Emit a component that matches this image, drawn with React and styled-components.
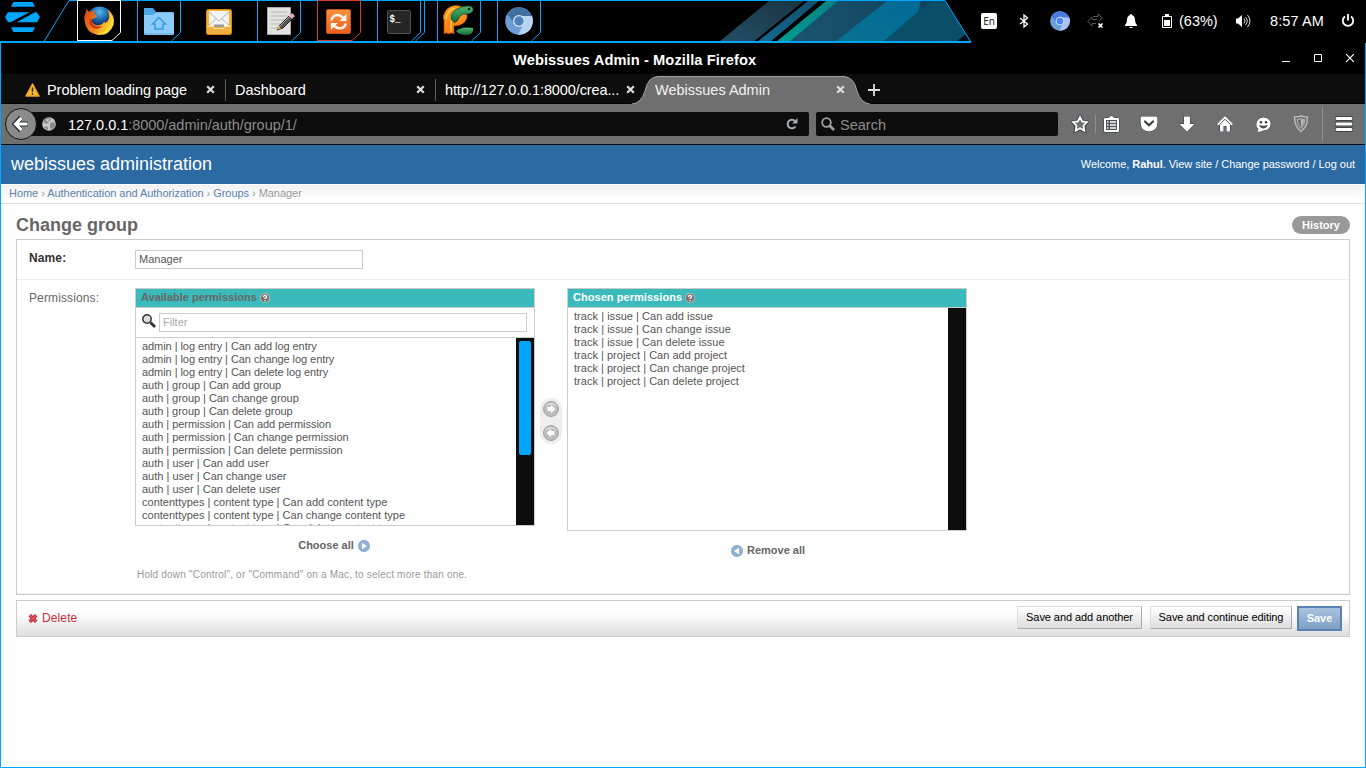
import React from "react";
import styled, { createGlobalStyle, css } from "styled-components";

const BLUE = "#00a5ff";
const DARK = "#0d0d0d";

const GlobalStyle = createGlobalStyle`
  * { box-sizing: border-box; }
  body { margin: 0; background: #000; overflow: hidden; }
  svg { display: block; flex: none; }
  a { text-decoration: none; color: inherit; }
`;

const Desktop = styled.div`
  width: 1366px;
  height: 768px;
  display: flex;
  flex-direction: column;
  background: #000;
  font-family: "Liberation Sans", Arial, sans-serif;
  overflow: hidden;
`;

/* ---------- system panel ---------- */
const Panel = styled.header`
  height: 43px;
  flex: none;
  display: flex;
  position: relative;
  color: #fff;
`;
const PanelBackdrop = styled.svg`
  position: absolute;
  left: 0;
  top: 0;
`;
const MenuLogo = styled.div`
  width: 77px;
  position: relative;
`;
const Dock = styled.nav`
  display: flex;
  position: relative;
`;
const DockItem = styled.div`
  width: 60px;
  height: 43px;
  display: grid;
  > * { grid-area: 1 / 1; }
`;
const Tray = styled.div`
  margin-left: auto;
  width: 395px;
  height: 41px;
  position: relative;
  display: flex;
  align-items: center;
  font-size: 14.5px;
`;
const TrayCell = styled.div`
  width: ${(p) => p.$w}px;
  padding-left: ${(p) => p.$indent || 0}px;
  letter-spacing: ${(p) => p.$ls || 0}px;
  flex: none;
  white-space: nowrap;
  display: flex;
  align-items: center;
`;
const LangBadge = styled.div`
  width: 16px;
  height: 16px;
  border-radius: 2px;
  background: #fff;
  color: #222;
  font: 10px/17px "Noto Sans", sans-serif;
  text-align: center;
`;

/* ---------- browser window ---------- */
const Window = styled.main`
  flex: 1;
  min-height: 0;
  display: flex;
  flex-direction: column;
  border: solid ${BLUE};
  border-width: 0 1px 1px;
  background: #fff;
`;
const TitleBar = styled.div`
  height: 31px;
  flex: none;
  background: #000;
  color: #fff;
  display: flex;
  align-items: center;
  padding: 3px 11px 0 512px;
  font-weight: bold;
  font-size: 14.67px;
  letter-spacing: 0.09px;
`;
const WindowControls = styled.div`
  margin-left: auto;
  display: flex;
  gap: 24px;
  padding-bottom: 4px;
`;
const TabStrip = styled.div`
  height: 30px;
  flex: none;
  display: flex;
  background: ${DARK};
  border-bottom: 1px solid #000;
  padding-left: 14px;
`;
const Tab = styled.div`
  width: 210px;
  height: 30px;
  display: flex;
  align-items: center;
  padding: 1px 10px 0 ${(p) => (p.$divided ? 9 : 10)}px;
  color: ${(p) => (p.$active ? "#f2f2f2" : "#fff")};
  font-size: 14.5px;
  position: relative;
  white-space: nowrap;
  ${(p) =>
    p.$divided &&
    css`
      border-left: 1px solid #5e5e5e;
      height: 22px;
      margin-top: 5px;
      padding-top: 0;
      padding-bottom: 1px;
    `}
`;
const TabShape = styled.svg`
  position: absolute;
  left: -15px;
  top: 0;
`;
const TabLabel = styled.span`
  position: relative;
  flex: 1;
  margin-left: ${(p) => p.$gap || 0}px;
  letter-spacing: ${(p) => p.$ls || 0}px;
`;
const CloseIcon = styled.svg`
  position: relative;
`;
const NewTab = styled.div`
  padding: 10px 0 0 13px;
`;
const Toolbar = styled.div`
  height: 41px;
  flex: none;
  display: flex;
  align-items: center;
  background: #6f6f6f;
  border-bottom: 1px solid #0a0a0a;
  padding-left: 4px;
`;
const BackButton = styled.div`
  width: 32px;
  height: 32px;
  flex: none;
  border-radius: 50%;
  border: 1px solid #111;
  background: #8a8a8a;
  display: grid;
  place-items: center;
  z-index: 1;
`;
const Field = styled.div`
  height: 24px;
  flex: none;
  display: flex;
  align-items: center;
  background: ${DARK};
  border-radius: 2px;
  font-size: 14.5px;
  color: #8c8c8c;
`;
const UrlField = styled(Field)`
  width: 779px;
  margin-left: -7px;
  padding: 0 11px 0 12px;
`;
const UrlText = styled.span`
  flex: 1;
  padding: 2px 0 0 12px;
  letter-spacing: -0.03px;
  b { font-weight: normal; color: #fff; }
`;
const SearchField = styled(Field)`
  width: 242px;
  margin-left: 7px;
  padding-left: 5px;
  gap: 5px;
  span { padding-top: 2px; }
`;
const Actions = styled.div`
  display: flex;
  align-items: center;
  margin-left: 12px;
`;
const Action = styled.div`
  width: 38px;
  height: 40px;
  display: grid;
  place-items: center;
`;
const StarAction = styled(Action)`
  width: 20px;
`;
const Divider = styled.div`
  width: 1px;
  height: ${(p) => p.$h}px;
  background: #8f8f8f;
  margin: 0 ${(p) => p.$r || 0}px 0 ${(p) => p.$l || 0}px;
`;

/* ---------- admin page ---------- */
const SiteHeader = styled.div`
  height: 39px;
  flex: none;
  display: flex;
  align-items: center;
  justify-content: space-between;
  padding: 0 10px;
  background: #2b6aa2;
  color: #fff;
`;
const SiteName = styled.div`
  font-size: 18px;
  line-height: 20px;
  padding-bottom: 1px;
`;
const UserTools = styled.div`
  font-size: 11px;
  padding-bottom: 2px;
  letter-spacing: -0.035px;
`;
const Breadcrumbs = styled.div`
  height: 20px;
  flex: none;
  padding: 2px 8px;
  font-size: 11px;
  line-height: 13px;
  letter-spacing: -0.045px;
  color: #999;
  border-top: 1px solid #fff;
  border-bottom: 1px solid #ddd;
  background: linear-gradient(#f1f1f1, #fff 80%);
  a { color: #5b80b2; }
`;
const Content = styled.div`
  padding: 11px 15px 0;
`;
const Heading = styled.div`
  display: flex;
  justify-content: space-between;
  height: 24px;
`;
const Title = styled.h1`
  margin: 0;
  font-size: 18px;
  line-height: 20px;
  color: #666;
`;
const HistoryButton = styled.a`
  height: 18px;
  width: 58px;
  margin-top: 1px;
  border-radius: 9px;
  background: #999;
  color: #fff;
  font: bold 11px/18px "Liberation Sans", sans-serif;
  text-align: center;
`;
const Module = styled.section`
  border: 1px solid #ccc;
`;
const FormRow = styled.div`
  display: flex;
  height: ${(p) => p.$h}px;
  padding: ${(p) => p.$top}px 12px 0;
  border-bottom: 1px solid #eee;
`;
const Label = styled.label`
  width: 106px;
  flex: none;
  padding-top: ${(p) => p.$top || 0}px;
  font-size: 12px;
  line-height: 16px;
  letter-spacing: 0.12px;
  color: ${(p) => (p.$strong ? "#333" : "#666")};
  font-weight: ${(p) => (p.$strong ? "bold" : "normal")};
`;
const Input = styled.div`
  width: ${(p) => p.$w}px;
  height: 19px;
  border: 1px solid #ccc;
  padding-left: 3px;
  font-size: 11px;
  line-height: 17px;
  color: ${(p) => (p.$placeholder ? "#aaa" : "#555")};
`;
const Selector = styled.div`
  display: flex;
`;
const Column = styled.div`
  width: 400px;
`;
const SelectBox = styled.div`
  border: 1px solid #ccc;
`;
const BoxTitle = styled.h2`
  margin: 0;
  height: 19px;
  display: flex;
  gap: 3px;
  padding: 1px 5px 0;
  background: #3bbabb;
  border-bottom: 1px solid #ccc;
  font-size: 11px;
  line-height: 15px;
  color: ${(p) => (p.$chosen ? "#fff" : "#666")};
  letter-spacing: ${(p) => (p.$chosen ? 0.05 : 0)}px;
  svg { margin-top: 3px; }
`;
const FilterBar = styled.div`
  display: flex;
  height: 30px;
  padding: 5px 6px;
  gap: 3px;
  border-bottom: 1px solid #ccc;
  svg { margin-top: 1px; }
`;
const ListArea = styled.div`
  display: flex;
  justify-content: space-between;
  height: ${(p) => p.$h}px;
`;
const Options = styled.ul`
  list-style: none;
  margin: 0;
  padding: 2px 6px 0;
  overflow: hidden;
  color: #555;
  font-size: 11px;
  line-height: 13px;
`;
const Option = styled.li`
  letter-spacing: ${(p) => p.$ls}px;
`;
const ScrollTrack = styled.div`
  width: 18px;
  background: ${DARK};
  padding: 3px;
`;
const ScrollThumb = styled.div`
  height: 114px;
  border-radius: 2px;
  background: ${BLUE};
`;
const Chooser = styled.div`
  width: 22px;
  height: 46px;
  margin: 110px 5px 0;
  padding: 3px;
  border-radius: 11px;
  background: #eee;
  display: flex;
  flex-direction: column;
  gap: 8px;
`;
const BulkLink = styled.a`
  display: flex;
  justify-content: center;
  align-items: center;
  gap: 4px;
  margin-top: 12px;
  padding: ${(p) => (p.$left ? "0 0 0 2px" : "0 2px 0 0")};
  height: 15px;
  font-size: 11px;
  font-weight: bold;
  color: #666;
  line-height: 14px;
  span { padding-bottom: 1px; }
`;
const Help = styled.p`
  margin: 14px 0 0 2px;
  font-size: 10px;
  line-height: 15px;
  color: #999;
  white-space: nowrap;
  letter-spacing: 0.2px;
`;
const SubmitRow = styled.div`
  display: flex;
  height: 37px;
  margin-top: 5px;
  padding: 5px 7px 0 11px;
  border: 1px solid #ccc;
  background: linear-gradient(#fff 35%, #dedede);
`;
const DeleteLink = styled.a`
  display: flex;
  gap: 4px;
  margin-right: auto;
  font-size: 12px;
  line-height: 24px;
  letter-spacing: 0.12px;
  color: #cc2c3c;
  svg { margin-top: 7px; }
`;
const Button = styled.button`
  width: ${(p) => p.$w}px;
  height: 23px;
  margin: 0 0 0 ${(p) => p.$gap}px;
  padding: 0;
  border: 1px solid;
  border-color: #ddd #aaa #aaa #ddd;
  background: linear-gradient(#fff, #ddd);
  color: #000;
  font: 11px/19px "Liberation Sans", Arial, sans-serif;
  letter-spacing: -0.07px;
  white-space: nowrap;
  ${(p) =>
    p.$primary &&
    css`
      height: 25px;
      border: 2px solid #5b80b2;
      background: linear-gradient(#a9c3de, #7ca0c7);
      color: #fff;
      font-weight: bold;
    `}
`;

/* ---------- drawings ---------- */
const Backdrop = () => (
  <PanelBackdrop width="972" height="43" viewBox="0 0 972 43">
    <defs>
      <linearGradient id="st1" x1="0" y1="1" x2="1" y2="0"><stop stopColor="#234f66" /><stop offset="1" stopColor="#193442" /></linearGradient>
      <linearGradient id="st2" x1="0" y1="1" x2="1" y2="0"><stop stopColor="#136a92" /><stop offset="1" stopColor="#154c6a" /></linearGradient>
      <linearGradient id="st3" x1="0" y1="1" x2="1" y2="0"><stop stopColor="#009e92" /><stop offset="1" stopColor="#087f80" /></linearGradient>
      <linearGradient id="st4"><stop stopColor="#1a5470" /><stop offset="1" stopColor="#0d3d55" /></linearGradient>
      <linearGradient id="st5" x1="0" y1="1" x2="1" y2="0"><stop stopColor="#0a7290" /><stop offset="1" stopColor="#006a98" /></linearGradient>
    </defs>
    <path d="M719 42L769 1H804L753 42Z" fill="url(#st1)" />
    <path d="M757 42L808 1H819L770 42Z" fill="url(#st2)" />
    <path d="M776 42L826 1H839L791 42Z" fill="url(#st3)" />
    <path d="M789 42L838 1H945L971 42Z" fill="url(#st4)" />
    <path d="M835 42L887 1H921L918 12L883 42Z" fill="url(#st5)" />
    <path d="M883 42L931 1H945L966 34L956 42Z" fill="#0a4e68" />
    <path d="M956 42L966 34L971 42Z" fill="#061018" />
    <path d="M44 41.500L69 .5H945L970.500 41.500" fill="none" stroke={BLUE} />
    <path d="M0 42H971" stroke={BLUE} strokeWidth="2" />
  </PanelBackdrop>
);

const Frame = ({ color = BLUE, double }) => (
  <svg width="52" height="43" viewBox="0 0 52 43" fill="none" stroke={color}>
    <path d="M.5 41V.5H43.500V32.500L34.500 41" />
    {double && <path d="M47.500 0V32.500L38.500 41" />}
    {color !== BLUE && <path d="M0 40.500H35" />}
  </svg>
);

const Zorin = () => (
  <svg width="44" height="36" viewBox="0 0 44 36" fill={BLUE}>
    <path d="M13.500 2H32.500L35 6.800H11ZM11 27.300H35L32.500 32H13.500Z" />
    <path d="M8 12.300H29.500L10.500 22.300H8L5 17ZM36.500 12.300L40 17L37 22.300H16.500L35 12.300Z" />
  </svg>
);

const icon = (children, x, y) => (
  <svg width="60" height="43" viewBox="0 0 60 43"><g transform={`translate(${x} ${y})`}>{children}</g></svg>
);

const Firefox = () => icon(
  <>
    <defs>
      <radialGradient id="ffb" cx=".5" cy=".2"><stop stopColor="#58b9e8" /><stop offset=".6" stopColor="#1a66ad" /><stop offset="1" stopColor="#12295d" /></radialGradient>
      <linearGradient id="ffo" x1="0" x2="1" y2=".5"><stop stopColor="#d8400e" /><stop offset=".55" stopColor="#f08420" /><stop offset="1" stopColor="#ffe02c" /></linearGradient>
    </defs>
    <circle cx="15.500" cy="14" r="13.500" fill="url(#ffb)" />
    <path d="M1.500 7Q2 4 3 3Q4 6 6 6Q9 4 11 5L10 8L13 10Q11 13 8 13Q7 17 12 19Q17 20 20 16Q23 18 25 12Q26 9 23 3Q32 9 29.500 19Q25 30 14 29Q2 27 .5 15Q0 10 1.500 7Z" fill="url(#ffo)" />
    <path d="M6 12Q9 15 8 17Q11 22 18 20Q14 25 8 21Q4 18 6 12Z" fill="#c63912" />
    <path d="M25 7Q30 15 25 22Q20 28 12 27Q21 30 27 23Q32 14 25 7Z" fill="#ffd83d" />
  </>, 7, 6);

const Folder = () => icon(
  <>
    <path d="M0 1H9L12 5H29V10H0Z" fill="#4ba6e8" />
    <path d="M0 8H9L12 5.500H30V27L29 28H1L0 27Z" fill="#8ccbfb" />
    <path d="M0 27H30" stroke="#58a9e3" />
    <path d="M8.500 17L15 10.500L21.500 17H19V22H11V17Z" fill="#8ccbfb" stroke="#359ce8" strokeWidth="1.500" />
  </>, 7, 7);

const Mail = () => icon(
  <>
    <rect x=".5" y=".5" width="25" height="25" rx="2" fill="#f5b13a" stroke="#d88812" />
    <rect x="1.500" y="17" width="23" height="8" fill="#eeb040" />
    <path d="M3 2H23V17H3Z" fill="#f3f3f1" />
    <path d="M3 3L13 12L23 3M3 16L10 10M23 16L16 10" fill="none" stroke="#b4b4b4" />
    <path d="M8 15.500H18V18H8Z" fill="#999" /><path d="M1 17.500H8V19.500H18V17.500H25" fill="none" stroke="#ffe0a0" />
  </>, 9, 9);

const Notes = () => icon(
  <>
    <path d="M.5.500H23.500V27.500H.5Z" fill="#e4e2df" stroke="#aaa" />
    <path d="M4 5H20M4 9H20M4 13H18M4 17H13M4 21H11" stroke="#b4b4b4" />
    <path d="M10 23L13 18L22 9L25 12L16 21Z" fill="#555" stroke="#222" /><path d="M12 20L23 9" stroke="#aaa" />
    <path d="M10 23L11.500 19L14 21.500Z" fill="#d9a747" /><path d="M22 9L25 6L28 9L25 12Z" fill="#e5a4cc" />
  </>, 10, 7);

const Sync = () => icon(
  <>
    <defs><linearGradient id="syn" x2="0" y2="1"><stop stopColor="#f79040" /><stop offset="1" stopColor="#ee5f20" /></linearGradient></defs>
    <rect x=".5" y=".5" width="24" height="24" rx="1.500" fill="url(#syn)" stroke="#c75214" />
    <path d="M5.200 11.500Q7 5.800 12 6Q15 6.300 18 9.500M20 14.500Q18.300 19.500 13.500 19.300Q10 19.200 7 16.200" fill="none" stroke="#fff5e8" strokeWidth="2.400" />
    <path d="M20.500 4.800V12H13.500ZM4.800 21V14H11.800Z" fill="#fff5e8" />
  </>, 9, 9);

const TermText = styled.text`
  font: bold 10px "Liberation Mono", monospace;
`;
const Terminal = () => icon(
  <>
    <rect x=".5" y=".5" width="23" height="23" rx="1" fill="#262626" stroke="#505050" />
    <TermText x="2.500" y="11.500" fill="#fff" textLength="11" lengthAdjust="spacingAndGlyphs">$_</TermText>
  </>, 10, 10);

const PythonEditor = () => icon(
  <>
    <defs>
      <linearGradient id="por" x2="0" y2="1"><stop stopColor="#ffa51f" /><stop offset="1" stopColor="#ff7512" /></linearGradient>
      <linearGradient id="pgr" x2="0" y2="1"><stop stopColor="#4fb871" /><stop offset="1" stopColor="#126738" /></linearGradient>
    </defs>
    <path d="M2 29V15Q0 12 3 7Q6 1 14 .5Q26 1 25 13Q22 21 12 21V29Q9 27 7 29Q4 27 2 29Z" fill="url(#por)" stroke="#a84407" strokeWidth=".6" />
    <path d="M12 18V10Q17 9 17 13Q15 17 12 18Z" fill="#3a1a05" />
    <path d="M4 14Q5 5 13 3M9 27V11Q10 7 14 7" fill="none" stroke="#ffd95a" strokeWidth="1.200" />
    <path d="M9 14Q8 8 15 4Q20 1 26 1Q32 1 31 6Q28 10 21 9Q17 11 15 16Q12 19 9 14Z" fill="url(#pgr)" stroke="#123d22" strokeWidth=".7" />
    <circle cx="27" cy="4" r="1.300" fill="#0a2514" />
    <path d="M14 26Q20 21 31 23Q32 30 24 30Q17 30 14 26Z" fill="url(#pgr)" />
  </>, 5, 5);

const Chromium = ({ s = 28 }) => (
  <svg width={s} height={s} viewBox="0 0 28 28">
    <circle cx="14" cy="14" r="13.800" fill="#6c9ed8" />
    <path d="M2 7Q6 0 14 .2Q23 1 27 9H14Q9 9 8.500 15Z" fill={s > 20 ? "#416f9f" : "#497ce0"} />
    <path d="M27 9H15Q21 13 18 18L13 28Q27 27 28 14Q28 11 27 9Z" fill={s > 20 ? "#b9d4f0" : "#a8c4f7"} />
    <circle cx="14" cy="14" r="6" fill="#d5e5f5" />
    <circle cx="14" cy="14" r="4.700" fill={s > 20 ? "#4b81bd" : "#4c85ee"} />
  </svg>
);
const ChromiumDock = () => icon(<Chromium />, 8, 7);

const Close = () => (
  <CloseIcon width="9" height="9" viewBox="0 0 9 9"><path d="M1.200 1.200L7.800 7.800M7.800 1.200L1.200 7.800" stroke="#ddd" strokeWidth="2.200" /></CloseIcon>
);

const HelpIcon = () => (
  <svg width="10" height="10" viewBox="0 0 10 10">
    <circle cx="5" cy="5" r="4.900" fill="#c9bcbc" /><circle cx="5" cy="5" r="4.200" fill="#7b7373" />
    <path d="M3.300 3.800Q3.500 2.300 5.100 2.300Q6.800 2.500 6.500 4Q6.300 4.700 5 5.300V6M5 7V8.200" fill="none" stroke="#fff" strokeWidth="1.200" />
  </svg>
);

const MoveIcon = ({ left }) => (
  <svg width="16" height="16" viewBox="0 0 16 16">
    <circle cx="8" cy="8" r="7.500" fill="#bcbcbc" stroke="#a5a5a5" />
    <path d="M2 6Q8 1 14 6Q12 2 8 2Q4 2 2 6Z" fill="#dcdcdc" />
    <path transform={left ? "matrix(-1 0 0 1 16 0)" : undefined} d="M4.500 6H8V3.800L12.500 8L8 12.200V10H4.500Z" fill="#fff" />
  </svg>
);

const BulkIcon = ({ left }) => (
  <svg width="12" height="12" viewBox="0 0 12 12">
    <circle cx="6" cy="6" r="5.700" fill="#8fb0d6" stroke="#7d9dc3" strokeWidth=".6" />
    <path d={left ? "M8 2.800V9.200L3 6Z" : "M4 2.800V9.200L9 6Z"} fill="#fff" />
  </svg>
);

const outlined = { fill: "#fff", stroke: "#33363d", strokeWidth: 1, paintOrder: "stroke" };

const StarIcon = () => (
  <svg width="18" height="18" viewBox="0 0 18 18">
    <path d="M9 2L11.200 6.500L16 7.200L12.500 10.700L13.300 15.700L9 13.300L4.700 15.700L5.500 10.700L2 7.200L6.800 6.500Z" fill="none" stroke="#33363d" strokeWidth="3.600" />
    <path d="M9 2L11.200 6.500L16 7.200L12.500 10.700L13.300 15.700L9 13.300L4.700 15.700L5.500 10.700L2 7.200L6.800 6.500Z" fill="#6f6f6f" stroke="#fff" strokeWidth="1.800" />
  </svg>
);
const ListIcon = () => (
  <svg width="17" height="18" viewBox="0 0 17 18">
    <path d="M1 4Q1 3 2 3H5.500L8.500.800L11.500 3H15Q16 3 16 4V16Q16 17 15 17H2Q1 17 1 16Z" {...outlined} />
    <path d="M3 5H14V15H3Z" fill="#50535a" />
    <path d="M4 7H5.500M7 7H13M4 10H5.500M7 10H13M4 13H5.500M7 13H13" stroke="#fff" strokeWidth="1.700" />
  </svg>
);
const PocketIcon = () => (
  <svg width="18" height="18" viewBox="0 0 18 18">
    <path d="M2 1.500H16Q17.400 1.500 17.400 3V8Q17 16 9 16.500Q1 16 .6 8V3Q.6 1.500 2 1.500Z" {...outlined} />
    <path d="M5 6.500L9 10.300L13 6.500" fill="none" stroke="#3b3e45" strokeWidth="2.200" strokeLinecap="round" />
  </svg>
);
const DownIcon = () => (
  <svg width="18" height="18" viewBox="0 0 18 18"><path d="M6 1.500H12V9H16.500L9 16.800L1.500 9H6Z" {...outlined} strokeLinejoin="round" /></svg>
);
const HomeIcon = () => (
  <svg width="18" height="18" viewBox="0 0 18 18">
    <path d="M9 1L17 9L15.500 10.500L14 9.500V16.500H10.500V11H7.500V16.500H4V9.500L2.500 10.500L1 9Z" {...outlined} />
    <path d="M3.500 9.500L9 4.300L14.500 9.500" fill="none" stroke="#55585e" />
  </svg>
);
const ChatIcon = () => (
  <svg width="17" height="17" viewBox="0 0 17 17">
    <path d="M8.500 1.500Q15.500 2 15.700 8Q15 14 8 14.500Q6 16 2 15.600L3.500 13Q1 11 1.300 8Q2 2 8.500 1.500Z" {...outlined} />
    <circle cx="6" cy="6.200" r="1.200" fill="#33363d" /><circle cx="11" cy="6.200" r="1.200" fill="#33363d" />
    <path d="M4 9Q8.500 10.500 13 9Q11 12.500 8.500 12.500Q5.500 12.500 4 9Z" fill="#4b4e55" />
  </svg>
);
const ShieldIcon = () => (
  <svg width="16" height="18" viewBox="0 0 16 18" fill="none" stroke="#b7b7b7">
    <path d="M1.500 2Q5 2 8 1Q11 2 14.500 2Q14.500 12 8 16.500Q1.500 12 1.500 2Z" strokeWidth="1.500" />
    <path d="M4.200 4.500Q6 4.500 8 3.800Q10 4.500 11.800 4.500Q11.500 10.500 8 13.500Q4.500 10.500 4.200 4.500Z" />
    <path d="M8 4.500Q10 4.500 11 5Q10.500 10 8 12.500Z" fill="#b7b7b7" stroke="none" />
  </svg>
);
const MenuIcon = () => (
  <svg width="18" height="16" viewBox="0 0 18 16">
    <path d="M1.500 2.500H16.500M1.500 8H16.500M1.500 13.500H16.500" stroke="#33363d" strokeWidth="4.500" strokeLinecap="round" />
    <path d="M2 2.500H16M2 8H16M2 13.500H16" stroke="#fff" strokeWidth="3" strokeLinecap="round" />
  </svg>
);

/* ---------- data ---------- */
const dock = [
  { Icon: Firefox, color: "#fff", framed: true },
  { Icon: Folder, framed: true },
  { Icon: Mail },
  { Icon: Notes, framed: true },
  { Icon: Sync, color: "#d83a2e", framed: true },
  { Icon: Terminal, double: true, framed: true },
  { Icon: PythonEditor, framed: true },
  { Icon: ChromiumDock, framed: true },
];

const perms = (app, model, tracking = 0) =>
  ["add", "change", "delete"].map((verb) => ({
    text: `${app} | ${model} | Can ${verb} ${model}`,
    tracking,
  }));

const available = [
  ...perms("admin", "log entry", -0.06),
  ...perms("auth", "group", -0.04),
  ...perms("auth", "permission", -0.035),
  ...perms("auth", "user"),
  ...perms("contenttypes", "content type", 0.01),
];
const chosen = [...perms("track", "issue", 0.04), ...perms("track", "project", 0.02)];

const OptionList = ({ items }) => (
  <Options>
    {items.map(({ text, tracking }) => <Option key={text} $ls={tracking}>{text}</Option>)}
  </Options>
);

function SystemPanel() {
  return (
    <Panel>
      <Backdrop />
      <MenuLogo><Zorin /></MenuLogo>
      <Dock>
        {dock.map(({ Icon, framed, color, double }, i) => (
          <DockItem key={i}>
            {framed && <Frame color={color} double={double} />}
            <Icon />
          </DockItem>
        ))}
      </Dock>
      <Tray>
        <TrayCell $w={48} $indent={10}><LangBadge>En</LangBadge></TrayCell>
        <TrayCell $w={31}>
          <svg width="10" height="14" viewBox="0 0 10 14" fill="none" stroke="#fff" strokeWidth="1.300"><path d="M1 4L8.500 10L5 13V1L8.500 4L1 10" /></svg>
        </TrayCell>
        <TrayCell $w={37}><Chromium s={20} /></TrayCell>
        <TrayCell $w={38}>
          <svg width="17" height="16" viewBox="0 0 17 16" fill="none" stroke="#555"><path d="M6 3.500H11V1L15.500 5L12 8M10 6.500H5V4L.7 8.500L5 13V10.500H9" /><path d="M11.500 10.500L15.500 14.500M15.500 10.500L11.500 14.500" stroke="#fff" strokeWidth="1.700" /></svg>
        </TrayCell>
        <TrayCell $w={37}>
          <svg width="12" height="14" viewBox="0 0 12 14" fill="#fff"><path d="M6 0Q7 0 7 1Q10 2 10 6Q10 9 12 11V12H0V11Q2 9 2 6Q2 2 5 1Q5 0 6 0ZM4.500 13H7.500V14H4.500Z" /></svg>
        </TrayCell>
        <TrayCell $w={17}>
          <svg width="10" height="14" viewBox="0 0 10 14"><path d="M.5 2.500H9.500V13.500H.5Z" fill="none" stroke="#fff" /><path d="M3 0H7V2H3ZM2 6H8V12H2Z" fill="#fff" /></svg>
        </TrayCell>
        <TrayCell $w={57}>(63%)</TrayCell>
        <TrayCell $w={34}>
          <svg width="15" height="14" viewBox="0 0 15 14"><path d="M0 4.500H2L6 1V13L2 9.500H0Z" fill="#fff" /><path d="M8 4.500Q10 7 8 9.500M9.500 3Q13 7 9.500 11M11.500 1Q16.500 7 11.500 13" fill="none" stroke="#ddd" /></svg>
        </TrayCell>
        <TrayCell $w={71} $ls={0.12}>8:57 AM</TrayCell>
        <svg width="14" height="14" viewBox="0 0 14 14" fill="none" stroke="#fff" strokeWidth="1.800"><path d="M4 2.500A5.200 5.200 0 1 0 10 2.500M7 0V6.500" /></svg>
      </Tray>
    </Panel>
  );
}

function BrowserChrome() {
  return (
    <>
      <TitleBar>
        Webissues Admin - Mozilla Firefox
        <WindowControls>
          <svg width="8" height="8"><path d="M0 7.500H8" stroke="#fff" /></svg>
          <svg width="8" height="8"><path d="M.5.500H7.500V7.500H.5Z" fill="none" stroke="#fff" /></svg>
          <svg width="8" height="8"><path d="M0 0L8 8M8 0L0 8" stroke="#fff" strokeWidth="1.200" /></svg>
        </WindowControls>
      </TitleBar>
      <TabStrip>
        <Tab>
          <svg width="15" height="14" viewBox="0 0 15 14"><path d="M7.500 1L14 13H1Z" fill="#f7b93c" stroke="#eda528" strokeWidth="1.500" strokeLinejoin="round" /><path d="M7.500 4.500V9M7.500 10V11.800" stroke="#333" strokeWidth="1.500" /></svg>
          <TabLabel $gap={7} $ls={-0.05}>Problem loading page</TabLabel><Close />
        </Tab>
        <Tab $divided><TabLabel>Dashboard</TabLabel><Close /></Tab>
        <Tab $divided><TabLabel $ls={-0.11}>http://127.0.0.1:8000/crea...</TabLabel><Close /></Tab>
        <Tab $active>
          <TabShape width="240" height="30" viewBox="0 0 240 30">
            <path d="M0 30Q11 30 15 17Q18 2.500 28 2.500H214Q224 3 227 17Q231 30 242 30Z" fill="#6f6f6f" />
            <path d="M2 30Q11 29.500 15 17Q18 2.500 28 2.500H214Q224 3 227 17Q231 29.500 240 30" fill="none" stroke="#a0a0a0" />
          </TabShape>
          <TabLabel>Webissues Admin</TabLabel><Close />
        </Tab>
        <NewTab><svg width="12" height="12"><path d="M6 0V12M0 6H12" stroke="#ddd" strokeWidth="1.800" /></svg></NewTab>
      </TabStrip>
      <Toolbar>
        <BackButton>
          <svg width="18" height="18" viewBox="0 0 18 18"><path d="M9 2.500L3 9L9 15.500M4 9H16" fill="none" stroke="#33363d" strokeWidth="5" /><path d="M9.500 3L3.500 9L9.500 15M4 9H15.500" fill="none" stroke="#fff" strokeWidth="3" /></svg>
        </BackButton>
        <UrlField>
          <svg width="14" height="14" viewBox="0 0 14 14"><circle cx="7" cy="7" r="6.800" fill="#c9c9c9" /><path d="M2 2.500Q5 0 8 1L9 3L6 5L5 7L2 6ZM8 6L12 5L13.500 8Q13 12 9 13L8 10ZM3 9L6 10L6 13Q3 12 2 10Z" fill="#8c8c8c" /><path d="M4 3L7 2L6 4Z" fill="#fff" /></svg>
          <UrlText><b>127.0.0.1</b>:8000/admin/auth/group/1/</UrlText>
          <svg width="12" height="12" viewBox="0 0 12 12"><path d="M9.500 8.500A4.300 4.300 0 1 1 9 3" fill="none" stroke="#a4abb4" strokeWidth="2" /><path d="M11.500 0V5.500H6Z" fill="#a4abb4" /></svg>
        </UrlField>
        <SearchField>
          <svg width="14" height="14" viewBox="0 0 14 14" fill="none" stroke="#a2a2a2"><circle cx="5.500" cy="5.500" r="4.300" strokeWidth="1.800" /><path d="M8.500 8.500L13 13" strokeWidth="2.600" /></svg>
          <span>Search</span>
        </SearchField>
        <Actions>
          <StarAction><StarIcon /></StarAction>
          <Divider $h={18} $l={5} $r={-4} />
          <Action><ListIcon /></Action>
          <Action><PocketIcon /></Action>
          <Action><DownIcon /></Action>
          <Action><HomeIcon /></Action>
          <Action><ChatIcon /></Action>
          <Action><ShieldIcon /></Action>
          <Divider $h={34} $l={2} $r={2} />
          <Action><MenuIcon /></Action>
        </Actions>
      </Toolbar>
    </>
  );
}

function AdminPage() {
  return (
    <>
      <SiteHeader>
        <SiteName>webissues administration</SiteName>
        <UserTools>Welcome, <b>Rahul</b>. <a>View site</a> / <a>Change password</a> / <a>Log out</a></UserTools>
      </SiteHeader>
      <Breadcrumbs>
        <a>Home</a> › <a>Authentication and Authorization</a> › <a>Groups</a> › Manager
      </Breadcrumbs>
      <Content>
        <Heading>
          <Title>Change group</Title>
          <HistoryButton>History</HistoryButton>
        </Heading>
        <Module>
          <FormRow $h={40} $top={10}>
            <Label $strong>Name:</Label>
            <Input $w={228}>Manager</Input>
          </FormRow>
          <FormRow $h={314} $top={8}>
            <Label $top={2}>Permissions:</Label>
            <Selector>
              <Column>
                <SelectBox>
                  <BoxTitle>Available permissions <HelpIcon /></BoxTitle>
                  <FilterBar>
                    <svg width="14" height="14" viewBox="0 0 14 14"><circle cx="5" cy="5" r="4.200" fill="#ddd" stroke="#333" strokeWidth="1.500" /><path d="M8.500 8.500L13 13" stroke="#333" strokeWidth="2.800" /></svg>
                    <Input $w={368} $placeholder>Filter</Input>
                  </FilterBar>
                  <ListArea $h={187}>
                    <OptionList items={available} />
                    <ScrollTrack><ScrollThumb /></ScrollTrack>
                  </ListArea>
                </SelectBox>
                <BulkLink><span>Choose all</span> <BulkIcon /></BulkLink>
                <Help>Hold down "Control", or "Command" on a Mac, to select more than one.</Help>
              </Column>
              <Chooser><MoveIcon /><MoveIcon left /></Chooser>
              <Column>
                <SelectBox>
                  <BoxTitle $chosen>Chosen permissions <HelpIcon /></BoxTitle>
                  <ListArea $h={222}>
                    <OptionList items={chosen} />
                    <ScrollTrack />
                  </ListArea>
                </SelectBox>
                <BulkLink $left><BulkIcon left /> <span>Remove all</span></BulkLink>
              </Column>
            </Selector>
          </FormRow>
        </Module>
        <SubmitRow>
          <DeleteLink>
            <svg width="10" height="11" viewBox="0 0 11 11"><path d="M2 2L9 9M9 2L2 9" stroke="#b3202a" strokeWidth="4" /><path d="M2.200 2.200L8.800 8.800M8.800 2.200L2.200 8.800" stroke="#e0525a" strokeWidth="2" /></svg>
            Delete
          </DeleteLink>
          <Button $w={125}>Save and add another</Button>
          <Button $w={142} $gap={8}>Save and continue editing</Button>
          <Button $w={45} $gap={5} $primary>Save</Button>
        </SubmitRow>
      </Content>
    </>
  );
}

export default function App() {
  return (
    <Desktop>
      <GlobalStyle />
      <SystemPanel />
      <Window>
        <BrowserChrome />
        <AdminPage />
      </Window>
    </Desktop>
  );
}
